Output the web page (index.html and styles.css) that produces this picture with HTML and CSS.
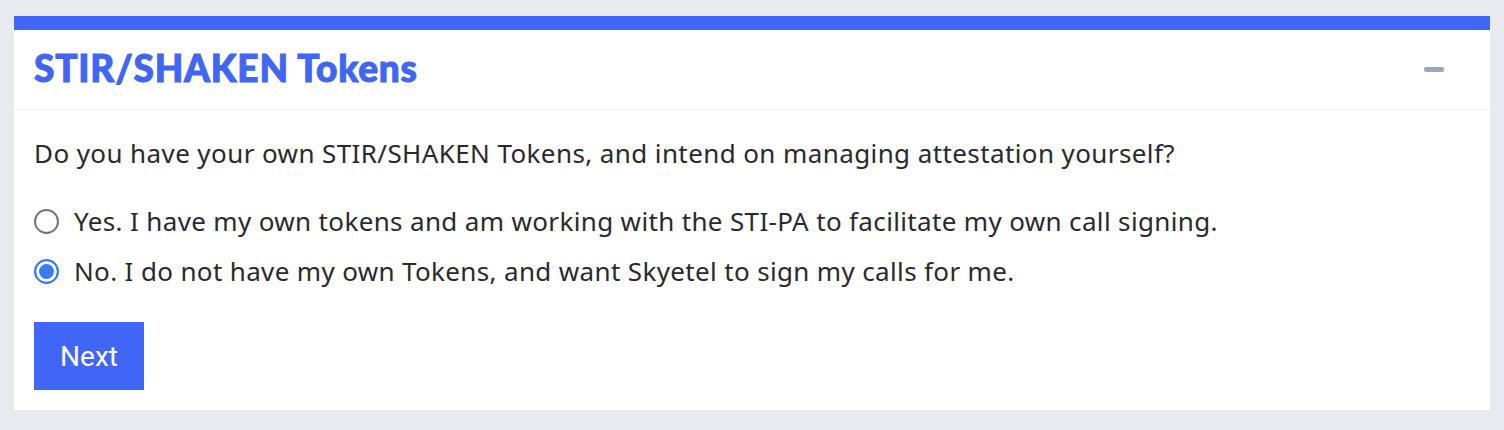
FILE: index.html
```html
<!DOCTYPE html>
<html>
<head>
<meta charset="utf-8">
<link rel="stylesheet" href="styles.css">
</head>
<body>
<div class="card">
  <div class="card-header">
    <h2 class="title">STIR/SHAKEN Tokens</h2>
    <span class="collapse"></span>
  </div>
  <div class="card-body">
    <p class="question">Do you have your own STIR/SHAKEN Tokens, and intend on managing attestation yourself?</p>
    <label class="option"><span class="radio"></span><span>Yes. I have my own tokens and am working with the STI-PA to facilitate my own call signing.</span></label>
    <label class="option"><span class="radio checked"></span><span>No. I do not have my own Tokens, and want Skyetel to sign my calls for me.</span></label>
    <button class="next">Next</button>
  </div>
</div>
</body>
</html>
```
FILE: styles.css
```css
html, body {
  margin: 0;
  padding: 0;
  background: #e9eaef;
}
body {
  padding: 16px 14px 20px 14px;
  font-family: "Noto Sans", sans-serif;
}
.card {
  background: #fff;
  border-top: 14px solid #4166f5;
}
.card-header {
  height: 79px;
  border-bottom: 1px solid #f0f0f2;
  display: flex;
  align-items: center;
  justify-content: space-between;
  padding: 0 46px 0 20px;
}
.title {
  margin: -4px 0 0 0;
  font-family: Lato, sans-serif;
  font-weight: 900;
  font-size: 37px;
  color: #4166f5;
  letter-spacing: 0.8px;
  -webkit-text-stroke: 1px #4166f5;
}
.collapse {
  width: 20px;
  height: 5px;
  border-radius: 2px;
  background: #9ea5ba;
  margin-top: -1px;
}
.card-body {
  padding: 24px 20px 20px 20px;
  color: #2a2a2e;
}
.question {
  margin: 0 0 24px 0;
  font-size: 26px;
  line-height: 38px;
  letter-spacing: 0.4px;
}
.option {
  display: flex;
  align-items: center;
  gap: 15px;
  font-size: 26px;
  letter-spacing: 0.35px;
  height: 50px;
}
.radio {
  width: 25px;
  height: 25px;
  border: 2px solid #767676;
  border-radius: 50%;
  box-sizing: border-box;
  flex: none;
}
.radio.checked {
  border: 2.5px solid #3b7cf5;
  background: #3b7cf5;
  box-shadow: inset 0 0 0 3px #fff;
}
.next {
  margin-top: 26px;
  width: 110px;
  height: 68px;
  border: none;
  background: #4166f5;
  color: #fff;
  font-family: Roboto, sans-serif;
  font-size: 28px;
  cursor: pointer;
}
```
